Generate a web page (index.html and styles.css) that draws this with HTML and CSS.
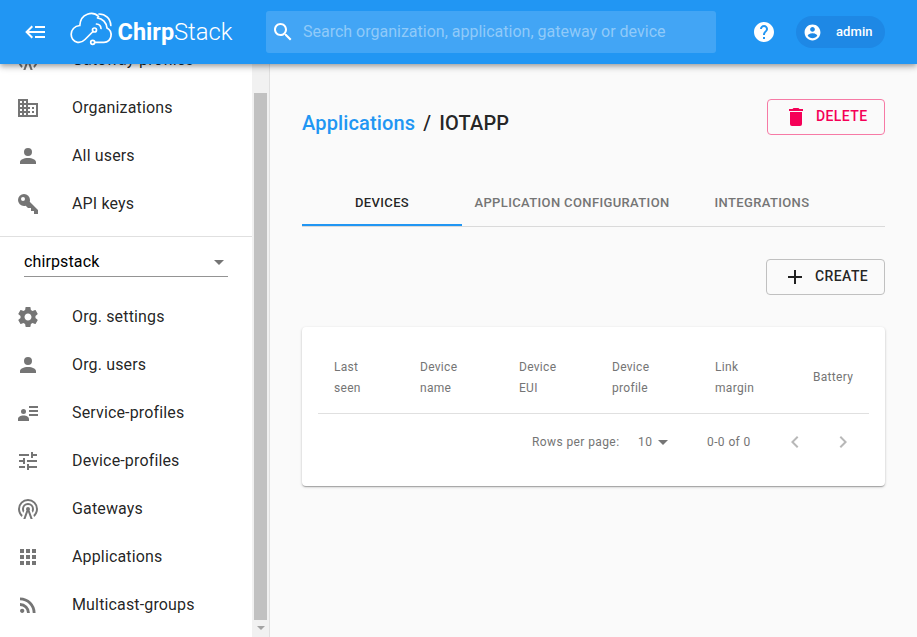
FILE: index.html
```html
<!DOCTYPE html>
<html lang="en">
<head>
<meta charset="utf-8">
<title>ChirpStack Application Server</title>
<link rel="stylesheet" href="styles.css">
</head>
<body>
<header class="appbar">
  <svg class="icon menu" viewBox="0 0 24 24"><path d="M5,13L9,17L7.6,18.42L1.18,12L7.6,5.58L9,7L5,11H21V13H5M21,6V8H11V6H21M21,16V18H11V16H21Z"/></svg>
  <svg class="logo" viewBox="70 12 166 40">
    <g fill="none" stroke="#fff" stroke-width="1.7" stroke-linecap="round">
      <path d="M93 31.500L85 39.500C82 42.500 79 42.600 77.500 42.300C69 41 68.500 27 79.800 25.500C80.500 13 93 11 98.500 16.500"/>
      <path d="M97.500 17.800C102.500 18.500 106.500 22.500 107 28C113.500 31.500 112 42.300 104 42.300H95"/>
      <path d="M99 14C105.500 14 110.500 18.500 110.800 25.500"/>
      <path d="M96.500 24C99 24.200 100.800 26 101 28.500"/>
      <circle cx="94.500" cy="30" r="2"/>
      <circle cx="92.700" cy="42.300" r="2"/>
    </g>
    <text class="logo-bold" x="117.600" y="39.500" textLength="56.500" lengthAdjust="spacingAndGlyphs">Chirp</text>
    <text class="logo-light" x="174" y="39.500" textLength="58.500" lengthAdjust="spacingAndGlyphs">Stack</text>
  </svg>
  <div class="search">
    <svg class="icon" viewBox="0 0 24 24"><path d="M15.500 14h-.79l-.28-.27C15.410 12.590 16 11.110 16 9.500 16 5.910 13.090 3 9.500 3S3 5.910 3 9.500 5.910 16 9.500 16c1.610 0 3.090-.59 4.230-1.570l.27.28v.79l5 4.990L20.490 19l-4.990-5zm-6 0C7.010 14 5 11.990 5 9.500S7.010 5 9.500 5 14 7.010 14 9.500 11.990 14 9.500 14z"/></svg>
    <span>Search organization, application, gateway or device</span>
  </div>
  <svg class="icon help" viewBox="0 0 24 24"><path d="M12 2C6.480 2 2 6.480 2 12s4.480 10 10 10 10-4.480 10-10S17.520 2 12 2zm1 17h-2v-2h2v2zm2.070-7.750l-.9.920C13.450 12.900 13 13.500 13 15h-2v-.5c0-1.100.45-2.100 1.170-2.830l1.240-1.260c.37-.36.59-.86.59-1.410 0-1.100-.9-2-2-2s-2 .9-2 2H8c0-2.210 1.790-4 4-4s4 1.790 4 4c0 .88-.36 1.680-.93 2.250z"/></svg>
  <div class="chip">
    <svg class="chip-icon" viewBox="0 0 24 24"><path d="M12 2C6.480 2 2 6.480 2 12s4.480 10 10 10 10-4.480 10-10S17.520 2 12 2zm0 3c1.660 0 3 1.340 3 3s-1.340 3-3 3-3-1.340-3-3 1.340-3 3-3zm0 14.200c-2.500 0-4.710-1.280-6-3.220.03-1.990 4-3.080 6-3.080 1.990 0 5.970 1.090 6 3.080-1.290 1.940-3.500 3.220-6 3.220z"/></svg>
    <span>admin</span>
  </div>
</header>
<div class="body">
  <aside class="sidebar">
    <nav class="nav">
      <ul class="list top">
        <li><svg class="icon" viewBox="0 0 24 24"><use href="#antenna"/></svg><span>Gateway-profiles</span></li>
        <li><svg class="icon" viewBox="0 0 24 24"><path d="M18,15H16V17H18M18,11H16V13H18M20,19H12V17H14V15H12V13H14V11H12V9H20M10,7H8V5H10M10,11H8V9H10M10,15H8V13H10M10,19H8V17H10M6,7H4V5H6M6,11H4V9H6M6,15H4V13H6M6,19H4V17H6M12,7V3H2V21H22V7H12Z"/></svg><span>Organizations</span></li>
        <li><svg class="icon" viewBox="0 0 24 24"><path id="person" d="M12,4A4,4 0 0,1 16,8A4,4 0 0,1 12,12A4,4 0 0,1 8,8A4,4 0 0,1 12,4M12,14C16.420,14 20,15.790 20,18V20H4V18C4,15.790 7.580,14 12,14Z"/></svg><span>All users</span></li>
        <li><svg class="icon" viewBox="0 0 24 24"><path d="M22 18V22H18V19H15V16H12L9.740 13.740C9.190 13.910 8.610 14 8 14A6 6 0 0 1 2 8A6 6 0 0 1 8 2A6 6 0 0 1 14 8C14 8.610 13.910 9.190 13.740 9.740L22 18M7 5A2 2 0 0 0 5 7A2 2 0 0 0 7 9A2 2 0 0 0 9 7A2 2 0 0 0 7 5Z"/></svg><span>API keys</span></li>
      </ul>
      <div class="select"><span>chirpstack</span><i class="caret"></i></div>
      <ul class="list">
        <li><svg class="icon" viewBox="0 0 24 24"><path d="M19.430 12.980c.04-.32.07-.64.07-.98s-.03-.66-.07-.98l2.110-1.650c.19-.15.24-.42.12-.64l-2-3.460c-.12-.22-.39-.3-.61-.22l-2.490 1c-.52-.4-1.080-.73-1.690-.98l-.38-2.650C14.460 2.180 14.250 2 14 2h-4c-.25 0-.46.18-.49.42l-.38 2.650c-.61.25-1.170.59-1.690.98l-2.490-1c-.23-.09-.49 0-.61.22l-2 3.460c-.13.22-.07.49.12.64l2.110 1.650c-.04.32-.07.65-.07.98s.03.66.07.98l-2.110 1.650c-.19.15-.24.42-.12.64l2 3.460c.12.22.39.3.61.22l2.490-1c.52.4 1.080.73 1.690.98l.38 2.650c.03.24.24.42.49.42h4c.25 0 .46-.18.49-.42l.38-2.650c.61-.25 1.170-.59 1.690-.98l2.490 1c.23.09.49 0 .61-.22l2-3.460c.12-.22.07-.49-.12-.64l-2.110-1.650zM12 15.500c-1.930 0-3.500-1.570-3.500-3.500s1.570-3.500 3.500-3.500 3.500 1.570 3.500 3.500-1.570 3.500-3.500 3.500z"/></svg><span>Org. settings</span></li>
        <li><svg class="icon" viewBox="0 0 24 24"><use href="#person"/></svg><span>Org. users</span></li>
        <li><svg class="icon" viewBox="0 0 24 24"><path d="M13 5H22V7H13ZM13 9H22V11H13ZM13 13H22V15H13ZM7.500 8A2.500 2.500 0 0 1 7.500 13A2.500 2.500 0 0 1 7.500 8M7.500 14.500C10.500 14.500 13 16 13 18V20H2V18C2 16 4.500 14.500 7.500 14.500Z"/></svg><span>Service-profiles</span></li>
        <li><svg class="icon" viewBox="0 0 24 24"><path d="M3 17v2h6v-2H3zM3 5v2h10V5H3zm10 16v-2h8v-2h-8v-2h-2v6h2zM7 9v2H3v2h4v2h2V9H7zm14 4v-2H11v2h10zm-6-4h2V7h4V5h-4V3h-2v6z"/></svg><span>Device-profiles</span></li>
        <li><svg class="icon" viewBox="0 0 24 24"><path id="antenna" d="M12,10A2,2 0 0,1 14,12C14,12.500 13.820,12.940 13.530,13.290L16.700,22H14.570L12,14.930L9.430,22H7.300L10.470,13.290C10.180,12.940 10,12.500 10,12A2,2 0 0,1 12,10M12,8A4,4 0 0,0 8,12C8,12.500 8.100,13 8.280,13.460L7.400,15.860C6.530,14.810 6,13.470 6,12A6,6 0 0,1 12,6A6,6 0 0,1 18,12C18,13.470 17.470,14.810 16.600,15.860L15.720,13.460C15.900,13 16,12.500 16,12A4,4 0 0,0 12,8M12,4A8,8 0 0,0 4,12C4,14.360 5,16.500 6.640,17.940L5.920,19.940C3.540,18.110 2,15.230 2,12A10,10 0 0,1 12,2A10,10 0 0,1 22,12C22,15.230 20.460,18.110 18.080,19.940L17.360,17.940C19,16.500 20,14.360 20,12A8,8 0 0,0 12,4Z"/></svg><span>Gateways</span></li>
        <li><svg class="icon" viewBox="0 0 24 24"><path d="M4 8h4V4H4v4zm6 12h4v-4h-4v4zm-6 0h4v-4H4v4zm0-6h4v-4H4v4zm6 0h4v-4h-4v4zm6-10v4h4V4h-4zm-6 4h4V4h-4v4zm6 6h4v-4h-4v4zm0 6h4v-4h-4v4z"/></svg><span>Applications</span></li>
        <li><svg class="icon" viewBox="0 0 24 24"><path d="M6.180,15.640A2.180,2.180 0 0,1 8.360,17.820C8.360,19 7.380,20 6.180,20C5,20 4,19 4,17.820A2.180,2.180 0 0,1 6.180,15.640M4,4.440A15.560,15.560 0 0,1 19.560,20H16.730A12.730,12.730 0 0,0 4,7.270V4.440M4,10.100A9.900,9.900 0 0,1 13.900,20H11.070A7.070,7.070 0 0,0 4,12.930V10.100Z"/></svg><span>Multicast-groups</span></li>
      </ul>
    </nav>
    <div class="scrollbar"><div class="thumb"></div><i class="down"></i></div>
  </aside>
  <main class="main">
    <div class="title-row">
      <h1><a>Applications</a><span class="slash">/</span><span>IOTAPP</span></h1>
      <button class="btn danger"><svg class="icon" viewBox="0 0 24 24"><path d="M19,4H15.500L14.500,3H9.500L8.500,4H5V6H19M6,19A2,2 0 0,0 8,21H16A2,2 0 0,0 18,19V7H6V19Z"/></svg><span>Delete</span></button>
    </div>
    <div class="tabs"><div class="tab active">Devices</div><div class="tab">Application configuration</div><div class="tab">Integrations</div></div>
    <div class="actions"><button class="btn create"><svg class="icon" viewBox="0 0 24 24"><path d="M19,13H13V19H11V13H5V11H11V5H13V11H19V13Z"/></svg><span>Create</span></button></div>
    <section class="card">
      <div class="thead"><div>Last<br>seen</div><div>Device<br>name</div><div>Device<br>EUI</div><div>Device<br>profile</div><div>Link<br>margin</div><div class="single">Battery</div></div>
      <div class="pager">
        <span class="rpp">Rows per page:</span><span class="count">10</span><i class="caret"></i><span class="range">0-0 of 0</span>
        <svg class="icon" viewBox="0 0 24 24"><path d="M15.410 16.590L10.830 12l4.580-4.590L14 6l-6 6 6 6 1.410-1.410z"/></svg>
        <svg class="icon" viewBox="0 0 24 24"><path d="M8.590 16.590L13.170 12 8.590 7.410 10 6l6 6-6 6-1.410-1.410z"/></svg>
      </div>
    </section>
  </main>
</div>
</body>
</html>
```
FILE: styles.css
```css
* { box-sizing: border-box; }
body { margin: 0; height: 637px; overflow: hidden; background: #fafafa; color: rgba(0,0,0,.87); font-family: Roboto, "Liberation Sans", sans-serif; font-size: 16px; }
.icon { width: 24px; height: 24px; fill: currentColor; flex: none; }
.appbar { position: relative; z-index: 2; display: flex; align-items: center; height: 64px; padding: 0 32px 0 24px; background: #2196f3; color: #fff; box-shadow: 0 2px 4px -1px rgba(0,0,0,.2), 0 4px 5px 0 rgba(0,0,0,.14), 0 1px 10px 0 rgba(0,0,0,.12); }
.logo { width: 166px; height: 40px; margin: 0 0 0 22px; flex: none; }
.logo text { fill: #fff; font-size: 24px; }
.logo-bold { font-weight: 700; }
.logo-light { font-weight: 300; }
.search { display: flex; align-items: center; width: 450px; height: 42px; margin-left: 30px; padding-left: 5px; border-radius: 3px; background: #42a5f5; white-space: nowrap; }
.search span { margin-left: 8px; padding-bottom: 2px; color: #90caf9; }
.help { margin-left: 36px; }
.chip { display: flex; align-items: center; width: 89px; height: 32px; margin-left: 20px; padding-left: 7px; border-radius: 16px; background: #1e88e5; font-size: 13px; font-weight: 500; }
.chip-icon { width: 19px; height: 19px; fill: #fff; }
.chip span { margin-left: 14px; padding-bottom: 2px; letter-spacing: .1px; }
.body { display: flex; height: 573px; }
.sidebar { display: flex; width: 270px; flex: none; overflow: hidden; border-right: 1px solid #e0e0e0; background: #fff; }
.nav { width: 252px; flex: none; }
.list { list-style: none; margin: 0; padding: 0; }
.list li { display: flex; align-items: center; height: 48px; padding-left: 16px; letter-spacing: .15px; }
.list .icon { color: #757575; }
.list span { margin: -2px 0 0 32px; }
.top { margin-top: -28px; padding-bottom: 8px; border-bottom: 1px solid #e0e0e0; }
.select { display: flex; align-items: center; justify-content: space-between; height: 32px; margin: 8px 24px 16px; padding: 1px 4px 0 0; border-bottom: 1px solid #949494; color: #000; letter-spacing: .12px; }
.caret { border: 5px solid transparent; border-top-color: #757575; border-bottom: 0; }
.select .caret { margin-top: 3px; }
.scrollbar { display: flex; flex-direction: column; align-items: center; width: 17px; padding: 29px 0 0; background: #f1f1f1; }
.thumb { width: 13px; height: 527px; background: #c1c1c1; }
.down { margin-top: 6px; border: 4px solid transparent; border-top-color: #a3a3a3; border-bottom: 0; }
.main { flex: 1; min-width: 0; padding: 35px 32px 0; }
.title-row { display: flex; align-items: center; justify-content: space-between; height: 36px; }
h1 { margin: 12px 0 0; font-size: 20px; font-weight: 500; letter-spacing: .15px; line-height: 24px; }
h1 a { color: #2196f3; }
.slash { margin: 0 8px; }
.btn { display: flex; align-items: center; width: 118px; height: 36px; padding: 0 0 0 16px; border: 1px solid #c0c0c0; border-radius: 4px; background: none; color: rgba(0,0,0,.87); font: 500 14px Roboto, sans-serif; letter-spacing: .4px; text-transform: uppercase; white-space: nowrap; }
.btn .icon { margin-right: 8px; }
.btn span { padding-bottom: 2px; }
.create { width: 119px; }
.danger { border-color: #f67aa5; color: #f50057; }
.tabs { display: flex; height: 49px; margin-top: 43px; border-bottom: 1px solid #dadada; font-size: 13px; font-weight: 500; letter-spacing: .37px; text-transform: uppercase; color: #757575; }
.tab { display: flex; align-items: center; justify-content: center; min-width: 160px; padding: 0 12px 0; white-space: nowrap; }
.tab:nth-child(2) { width: 220px; }
.active { color: rgba(0,0,0,.87); border-bottom: 2px solid #2196f3; padding-top: 2px; }
.actions { display: flex; justify-content: flex-end; margin-top: 32px; }
.card { height: 159px; margin-top: 32px; padding: 16px; border-radius: 4px; background: #fff; box-shadow: 0 1px 3px 0 rgba(0,0,0,.2), 0 1px 1px 0 rgba(0,0,0,.14), 0 2px 1px -1px rgba(0,0,0,.12); color: #757575; font-size: 12px; }
.thead { display: grid; grid-template-columns: 86px 99px 93px 103px 98px 1fr; align-items: center; height: 71px; padding-left: 16px; border-bottom: 1px solid #e0e0e0; line-height: 21px; letter-spacing: .3px; }
.single { padding-bottom: 2px; }
.pager { display: flex; align-items: center; height: 56px; padding-left: 214px; letter-spacing: .4px; white-space: nowrap; }
.rpp { width: 106px; }
.count { width: 20px; }
.range { width: 76px; margin-left: 39px; }
.pager span, .pager .caret { flex: none; }
.pager .icon { margin-right: 24px; color: #b8b8b8; }
.pager .icon:last-child { margin-right: 0; }
```
